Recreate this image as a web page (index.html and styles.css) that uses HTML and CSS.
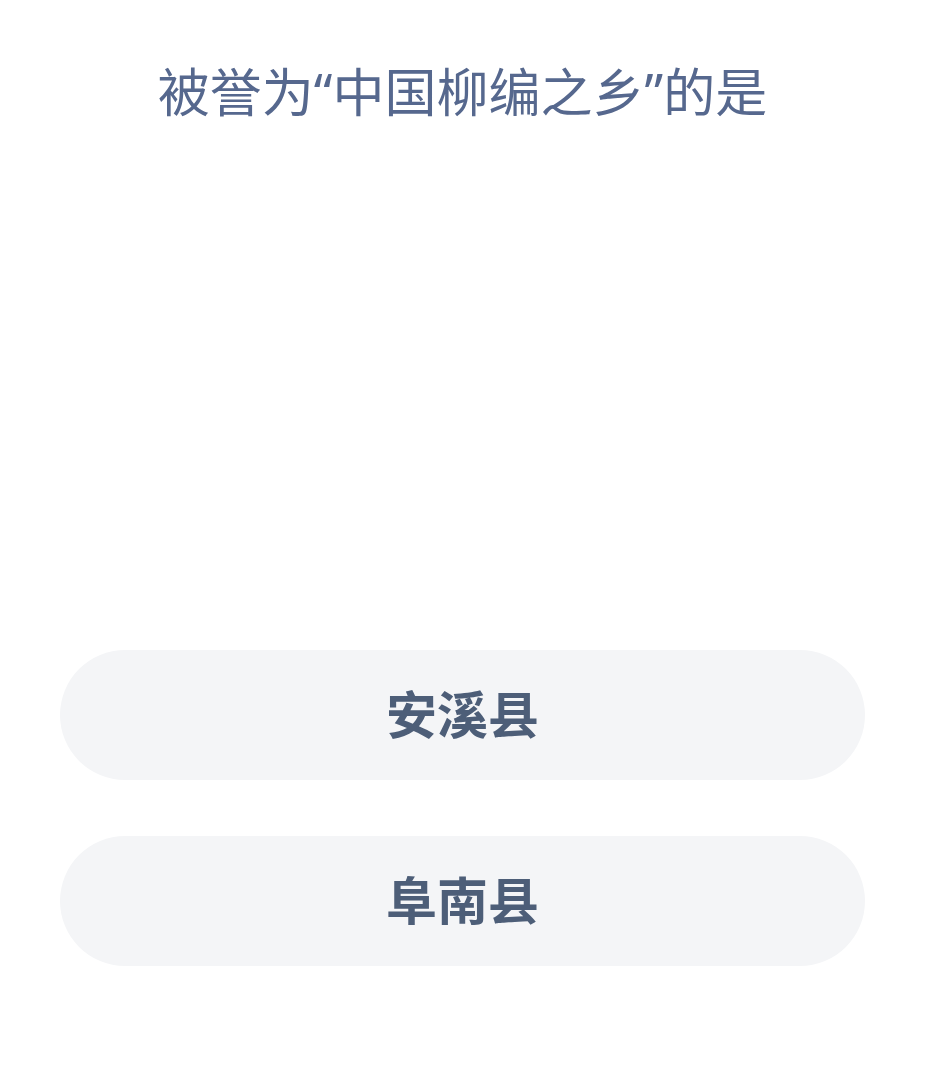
FILE: index.html
```html
<!DOCTYPE html>
<html lang="zh-CN">
<head>
<meta charset="utf-8">
<link rel="stylesheet" href="styles.css">
</head>
<body>
<main class="page">
  <h1 class="question">被誉为“中国柳编之乡”的是</h1>
  <div class="options">
    <div class="option">安溪县</div>
    <div class="option">阜南县</div>
  </div>
</main>
</body>
</html>
```
FILE: styles.css
```css
html, body {
  margin: 0;
  padding: 0;
  background: #ffffff;
}
.page {
  width: 925px;
  height: 1089px;
  display: flex;
  flex-direction: column;
  align-items: center;
  font-family: "Noto Sans", "Noto Sans CJK SC", sans-serif;
}
.question {
  margin: 58px 0 0;
  font-size: 52px;
  line-height: 68px;
  font-weight: 400;
  color: #56688e;
  text-align: center;
}
.options {
  margin-top: 524px;
  display: flex;
  flex-direction: column;
  gap: 56px;
}
.option {
  width: 805px;
  height: 130px;
  box-sizing: border-box;
  padding-bottom: 6px;
  border-radius: 65px;
  background: #f4f5f7;
  display: flex;
  align-items: center;
  justify-content: center;
  font-size: 51px;
  font-weight: 600;
  color: #4d5e78;
}
```
